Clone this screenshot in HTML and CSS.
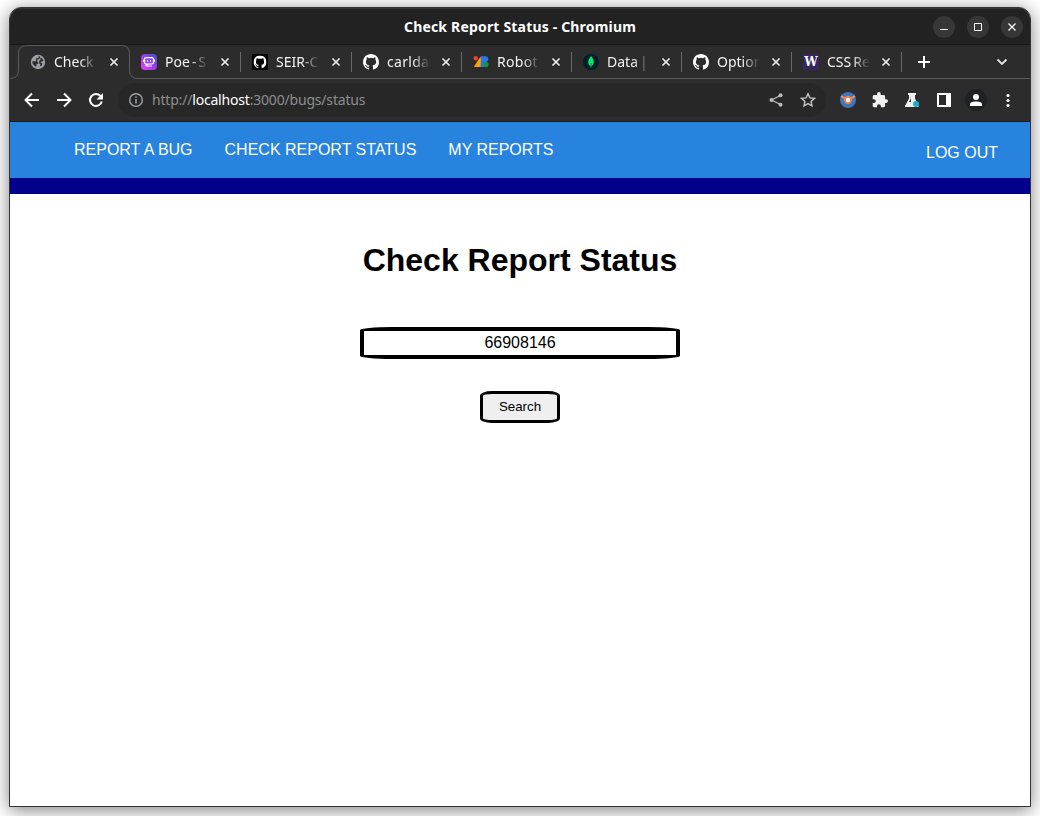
FILE: index.html
```
<!DOCTYPE html>
<html lang="en">
<head>
<meta charset="utf-8">
<title>Check Report Status</title>
<link rel="stylesheet" href="styles.css">
</head>
<body>
<svg class="defs" width="0" height="0">
  <symbol id="close" viewBox="0 0 10 10"><path d="M1.500 1.500l7 7M8.500 1.500l-7 7" fill="none" stroke="currentColor" stroke-width="1.600"/></symbol>
  <symbol id="github" viewBox="0 0 16 16"><path fill="#fff" d="M8 0C3.58 0 0 3.58 0 8c0 3.54 2.29 6.53 5.47 7.59.4.07.55-.17.55-.38 0-.19-.01-.82-.01-1.49-2.01.37-2.53-.49-2.69-.94-.09-.23-.48-.94-.82-1.13-.28-.15-.68-.52-.01-.53.63-.01 1.08.58 1.23.82.72 1.21 1.87.87 2.33.66.07-.52.28-.87.51-1.07-1.78-.2-3.64-.89-3.64-3.95 0-.87.31-1.59.82-2.15-.08-.2-.36-1.02.08-2.12 0 0 .67-.21 2.2.82a7.6 7.6 0 0 1 4 0c1.53-1.04 2.2-.82 2.2-.82.44 1.1.16 1.92.08 2.12.51.56.82 1.27.82 2.15 0 3.07-1.87 3.75-3.65 3.95.29.25.54.73.54 1.48 0 1.07-.01 1.93-.01 2.2 0 .21.15.46.55.38A8 8 0 0 0 16 8c0-4.42-3.58-8-8-8z"/></symbol>
</svg>
<div class="window">
  <div class="titlebar">
    <span class="title">Check Report Status - Chromium</span>
    <div class="controls">
      <span class="control"><svg width="10" height="10"><path d="M1 7.500h8" stroke="#fff" stroke-width="1"/></svg></span>
      <span class="control"><svg width="10" height="10"><path d="M1.500 1.500h7v7h-7z" fill="none" stroke="#fff"/></svg></span>
      <span class="control"><svg width="10" height="10"><path d="M1.500 1.500l7 7M8.500 1.500l-7 7" stroke="#fff" stroke-width="1.200"/></svg></span>
    </div>
  </div>
  <div class="tabstrip">
    <svg class="outline" width="1020" height="34"><path d="M0 33.500Q8.500 33.500 8.500 25V8.500Q8.500 .5 16.500 .5H111.500Q119.500 .5 119.500 8.500V25.500Q119.500 33.500 128 33.500H1020" fill="none" stroke="#5c5c5c"/></svg>
    <div class="tab active"><svg class="fav" viewBox="0 0 16 16"><circle cx="8" cy="8" r="7.200" fill="#9aa0a6"/><path d="M9.300 2.200v1.300c0 .8-.6 1.400-1.400 1.400H6.700v1.300c0 .5-.4.800-.8.800" fill="none" stroke="#2c2c2c" stroke-width="1.300"/><path d="M2.300 7.200h4.200c.9 0 1.600.7 1.600 1.600v1.100H6.500v2.700c-2.500-.5-4.300-2.700-4.200-5.400zM10.200 3.500l2 .9 1.400 2.300-1.800.9c-.8 0-1.100.4-1.100 1.100l1.600.6-.5 2.200-2.300 1.300 1-2.200-1.400-1.400V7.200l1.500-1.500z" fill="#2c2c2c"/></svg><span class="name">Check</span><svg class="x"><use href="#close"/></svg></div>
    <div class="tab wide-tab"><svg class="fav" viewBox="0 0 16 16"><defs><linearGradient id="poe" x1="0" y1="1" x2="1" y2="0"><stop offset="0" stop-color="#ed45e8"/><stop offset=".45" stop-color="#a33df5"/><stop offset="1" stop-color="#4054bd"/></linearGradient></defs><rect width="16" height="16" rx="4" fill="url(#poe)"/><rect x="3.500" y="3.700" width="9" height="6.300" rx="1.800" fill="none" stroke="#fff" stroke-width="1.200"/><path d="M2.500 5.500v2.500M13.500 5.500v2.500M6.500 6v1.700M9.500 6v1.700M5 12h6" fill="none" stroke="#fff" stroke-width="1.100"/><path d="M4.500 10h3l-3 2.600z" fill="#fff"/></svg><span class="name tight">Poe - S</span><svg class="x"><use href="#close"/></svg></div>
    <div class="tab wide-tab"><svg class="fav" viewBox="0 0 16 16"><rect width="16" height="16" fill="#000"/><use href="#github" x="1.500" y="1.500" width="13" height="13"/></svg><span class="name">SEIR-C</span><svg class="x"><use href="#close"/></svg></div>
    <div class="tab"><svg class="fav" viewBox="0 0 16 16"><use href="#github" width="16" height="16"/></svg><span class="name loose">carlda</span><svg class="x"><use href="#close"/></svg></div>
    <div class="tab"><svg class="fav" viewBox="0 0 16 16"><path d="M7.500 2.500L.8 13H8V5z" fill="#ff9f00"/><path d="M8 2.200h4.500a2.800 2.800 0 0 1 1.800 5L12 9l-1 4H7.500z" fill="#2878e5"/><circle cx="2.700" cy="4.200" r="2.200" fill="#ea4335"/><circle cx="12.900" cy="10.500" r="2.700" fill="#159347"/></svg><span class="name loose">Robot</span><svg class="x"><use href="#close"/></svg></div>
    <div class="tab"><svg class="fav" viewBox="0 0 16 16"><circle cx="8" cy="8" r="8" fill="#001e2b"/><path d="M8 2C4.300 6.500 4.400 10 7.500 12.200L8 14l.5-1.800C11.600 10 11.700 6.500 8 2z" fill="#00ed64"/><path d="M8 9v5" stroke="#00684a" stroke-width=".8"/></svg><span class="name tight">Data |</span><svg class="x"><use href="#close"/></svg></div>
    <div class="tab"><svg class="fav" viewBox="0 0 16 16"><use href="#github" width="16" height="16"/></svg><span class="name">Option</span><svg class="x"><use href="#close"/></svg></div>
    <div class="tab"><span class="fav w3">W</span><span class="name tight">CSS Re</span><svg class="x"><use href="#close"/></svg></div>
    <svg class="newtab" width="14" height="14"><path d="M7 1v12M1 7h12" stroke="#fff" stroke-width="2"/></svg>
    <svg class="chevron" width="12" height="10"><path d="M1.500 2.500L6 7l4.500-4.500" fill="none" stroke="#e4e4e4" stroke-width="1.800"/></svg>
  </div>
  <div class="toolbar">
    <svg class="nav" viewBox="0 0 16 16"><path d="M15 8H2M8 1.500L1.500 8 8 14.500" fill="none" stroke="#fff" stroke-width="1.900"/></svg>
    <svg class="nav" viewBox="0 0 16 16"><path d="M1 8h13M8 1.500L14.500 8 8 14.500" fill="none" stroke="#fff" stroke-width="1.900"/></svg>
    <svg class="nav" viewBox="0 0 16 16"><path d="M13.800 9.500A6 6 0 1 1 12.500 4" fill="none" stroke="#fff" stroke-width="2"/><path d="M15 1v6.500H8.500z" fill="#fff"/></svg>
    <div class="address">
      <svg width="16" height="16" fill="none" stroke="#9da2a5"><circle cx="8" cy="8" r="6.300" stroke-width="1.400"/><path d="M8 7v4.500M8 4.300v1.500" stroke-width="1.500"/></svg>
      <span class="url">http://<b>localhost</b>:3000/bugs/status</span>
      <svg class="share" width="16" height="16"><path d="M12.500 3.500L3.500 8l9 4.500" fill="none" stroke="#bdbdbd" stroke-width="1.300"/><g fill="#bdbdbd"><circle cx="12.500" cy="3.300" r="2"/><circle cx="3.500" cy="8" r="2"/><circle cx="12.500" cy="12.700" r="2"/></g></svg>
      <svg width="16" height="16"><path d="M8 1.800l1.900 4.100 4.500.5-3.300 3 .9 4.400L8 11.600l-4 2.200.9-4.400-3.300-3 4.500-.5z" fill="none" stroke="#c4c4c4" stroke-width="1.400"/></svg>
    </div>
    <div class="extensions">
      <svg width="16" height="16"><circle cx="8" cy="8" r="8" fill="#3c76bf"/><path d="M1 4l5 3M15 4l-5 3" stroke="#f79661" stroke-width="2"/><circle cx="8" cy="8" r="3.200" fill="#fff" stroke="#f47e42" stroke-width="2"/></svg>
      <svg width="16" height="16" viewBox="1 1 22 22"><path fill="#f1f1f1" d="M20.500 11H19V7c0-1.100-.9-2-2-2h-4V3.500a2.500 2.500 0 0 0-5 0V5H4c-1.100 0-2 .9-2 2v3.800h1.500a2.700 2.700 0 0 1 0 5.400H2V20c0 1.100.9 2 2 2h3.800v-1.500a2.700 2.700 0 0 1 5.400 0V22H17c1.100 0 2-.9 2-2v-4h1.500a2.500 2.500 0 0 0 0-5z"/></svg>
      <svg width="16" height="16"><path d="M4 1h8v2h-1v3.500L14.500 14v1H1v-1L5 6.500V3H4z" fill="#f1f1f1"/><path d="M6.500 3v4L5 10h2z" fill="#2c2c2c"/><circle cx="12" cy="12" r="3" fill="#12b0ce"/></svg>
      <svg width="16" height="16"><path d="M2 2h12v12H2z" fill="none" stroke="#fff" stroke-width="2"/><path d="M10 2h5v12h-5z" fill="#fff"/></svg>
      <span class="avatar"><svg width="14" height="14"><circle cx="7" cy="4" r="3" fill="#fff"/><path d="M1 13v-2C1 7.500 13 7.500 13 11v2z" fill="#fff"/></svg></span>
      <svg class="more" width="16" height="16" fill="#fff"><circle cx="8" cy="3.500" r="1.600"/><circle cx="8" cy="8.500" r="1.600"/><circle cx="8" cy="13.500" r="1.600"/></svg>
    </div>
  </div>
  <div class="page">
    <nav class="menu"><a>REPORT A BUG</a><a>CHECK REPORT STATUS</a><a>MY REPORTS</a><a class="logout">LOG OUT</a></nav>
    <main class="content">
      <h1>Check Report Status</h1>
      <input class="number" type="text" value="66908146">
      <button class="search">Search</button>
    </main>
  </div>
</div>
</body>
</html>
```
FILE: styles.css
```
* { box-sizing: border-box; }
body { margin: 0; height: 816px; overflow: hidden; padding: 7px 9px 9px; background: #fff; font-family: "Liberation Sans", Arial, sans-serif; }
.defs { display: block; position: absolute; }
.window { height: 800px; display: flex; flex-direction: column; border: 1px solid #333; border-radius: 12px 12px 0 0; overflow: hidden; background: #fff; box-shadow: 0 3px 18px rgba(0,0,0,.5); }
.titlebar { height: 37px; flex: none; display: grid; grid-template-columns: 1fr auto 1fr; align-items: center; background: #222; border-top: 1px solid #363636; border-bottom: 1px solid #171717; }
.title { grid-column: 2; color: #fff; font: 700 14px "Noto Sans", sans-serif; letter-spacing: .18px; }
.controls { display: flex; justify-content: flex-end; gap: 12px; padding-right: 7px; }
.control { width: 22px; height: 22px; border-radius: 50%; background: #373737; display: grid; place-items: center; }
.tabstrip { height: 34px; flex: none; position: relative; display: flex; align-items: center; padding-left: 9px; background: #2c2c2c; }
.outline { position: absolute; left: 0; top: 0; }
.tab { position: relative; width: 110px; height: 34px; flex: none; display: flex; align-items: center; padding: 0 11px; }
.tab::after { content: ""; position: absolute; right: 0; top: 7px; width: 1px; height: 20px; background: #696969; }
.active, .wide-tab { width: 111px; }
.active::after { display: none; }
.fav { width: 16px; height: 16px; flex: none; }
.w3 { background: #37265e; color: #fff; font: 700 14px/16px "DejaVu Serif", serif; font-size: 12px; text-align: center; }
.name { width: 43px; margin-left: 8px; overflow: hidden; white-space: nowrap; color: #f2f2f2; font: 14px/20px "Noto Sans", sans-serif; -webkit-mask-image: linear-gradient(90deg, #000 60%, transparent); mask-image: linear-gradient(90deg, #000 60%, transparent); }
.tight { word-spacing: -1.5px; }
.loose { letter-spacing: .3px; }
.x { width: 10px; height: 10px; margin-left: auto; color: #f2f2f2; }
.newtab { margin-left: 15px; }
.chevron { margin-left: auto; margin-right: 22px; }
.toolbar { height: 43px; flex: none; display: flex; align-items: center; background: #2c2c2c; border-bottom: 1px solid #171717; padding: 0 14px; }
.nav { width: 16px; height: 16px; margin-right: 16px; flex: none; }
.address { width: 708px; height: 34px; margin-left: -2px; padding: 0 10px; display: flex; align-items: center; border-radius: 17px; background: #272727; }
.url { margin-left: 8px; color: #8e8e8e; font: 14px/20px "Noto Sans", sans-serif; letter-spacing: -.19px; white-space: nowrap; }
.url b { color: #fff; font-weight: 400; }
.share { margin-left: auto; margin-right: 16px; }
.extensions { display: flex; align-items: center; gap: 16px; margin-left: 14px; }
.avatar { width: 22px; height: 22px; margin: 0 -3px; border-radius: 50%; background: #202124; display: grid; place-items: center; }
.page { flex: 1; background: #fff; }
.menu { height: 72px; display: flex; align-items: flex-start; gap: 32px; padding: 19px 32px 0 64px; background: #2783de; border-bottom: 16px solid #00008b; color: #fff; font-size: 16px; line-height: 18px; }
.logout { margin: 3px 0 0 auto; }
.content { display: flex; flex-direction: column; align-items: center; padding-top: 47px; }
h1 { margin: 0; font-size: 32px; line-height: 38px; color: #000; }
.number { width: 320px; height: 32px; margin-top: 48px; padding: 0; border: 4px solid #000; border-radius: 10%; background: #fff; color: #000; text-align: center; font: 16px "Liberation Sans", Arial, sans-serif; }
.search { width: 80px; height: 32px; margin-top: 32px; padding: 0 0 2px; border: 3px solid #000; border-radius: 15%; background: #efefef; color: #000; font: 13.333px "Liberation Sans", Arial, sans-serif; }
```
